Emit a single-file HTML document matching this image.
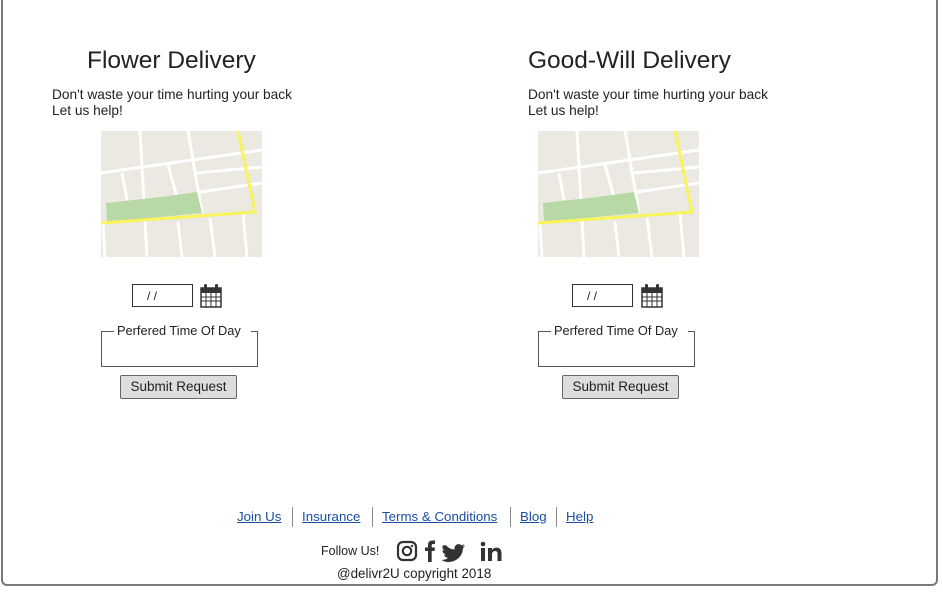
<!DOCTYPE html>
<html><head><meta charset="utf-8"><style>
body{margin:0;width:943px;height:597px;background:#fff;font-family:"Liberation Sans",sans-serif;color:#222;position:relative;overflow:hidden}
.frame{position:absolute;left:1px;top:-10px;width:933px;height:592px;border:2px solid #7a7a7a;border-radius:0 0 6px 6px}
.a{position:absolute;white-space:nowrap}
h1{position:absolute;margin:0;font-weight:normal;font-size:24.5px;white-space:nowrap}
.p{font-size:13.7px;line-height:16px}
.date{position:absolute;width:61px;height:23px;border:1px solid #333;font-size:12px;box-sizing:border-box;padding:4px 0 0 14px}
.fs{position:absolute;width:157px;height:36px;border:1px solid #555;border-top:none;box-sizing:border-box}
.fs:before{content:"";position:absolute;left:0;top:0;width:12px;border-top:1px solid #555}
.fs:after{content:"";position:absolute;right:0;top:0;width:6px;border-top:1px solid #555}
.fs span{position:absolute;left:15px;top:-8px;font-size:12.8px}
.btn{position:absolute;width:117px;height:24px;border:1px solid #666;background:#ddd;font-size:13.5px;text-align:center;line-height:22px;box-sizing:border-box;border-radius:2px}
.links a{color:#1a4fa0;text-decoration:underline;font-size:13.3px}
.sep{position:absolute;width:1px;height:20px;background:#888;top:507px}
</style></head><body>
<div class="frame"></div>
<svg width="0" height="0" style="position:absolute"><defs>
<g id="map">
<rect width="161" height="126" fill="#ebe9e1"/>
<g stroke="#fff" stroke-width="3" fill="none">
<path d="M0 42 L161 19"/><path d="M96 42 L161 36"/><path d="M99 61 L161 52"/>
<path d="M39 0 L46 126"/><path d="M87 0 L101 82"/><path d="M21 42 L26 69"/>
<path d="M67 34 L76 66"/><path d="M77 91 L81 126"/><path d="M109 87 L114 126"/><path d="M142 82 L146 126"/><path d="M2 93 L4 126"/>
</g>
<path d="M5 72 L60 66 L96 61 L101 82 L6 91Z" fill="#b8d9a5"/>
<path d="M137 0 L154 81 L0 92" stroke="#f8f45a" stroke-width="3" fill="none"/>
</g>
<g id="cal">
<rect x="1" y="4" width="20" height="19" fill="none" stroke="#333" stroke-width="1.5"/>
<rect x="1" y="4" width="20" height="5" fill="#333"/>
<path d="M1 13H21M1 17H21M6 9V23M11 9V23M16 9V23" stroke="#333" stroke-width="1"/>
<rect x="4" y="0" width="3" height="6" rx="1.5" fill="#333"/><rect x="15" y="0" width="3" height="6" rx="1.5" fill="#333"/>
</g></defs></svg>

<h1 style="left:87px;top:47px">Flower Delivery</h1>
<div class="a p" style="left:52px;top:87px">Don't waste your time hurting your back<br>Let us help!</div>
<svg class="a" style="left:101px;top:131px" width="161" height="126"><use href="#map"/></svg>
<div class="date" style="left:132px;top:284px">/ /</div>
<svg class="a" style="left:200px;top:284px" width="23" height="24"><use href="#cal"/></svg>
<div class="fs" style="left:101px;top:331px"><span>Perfered Time Of Day</span></div>
<div class="btn" style="left:120px;top:375px">Submit Request</div>

<h1 style="left:528px;top:47px">Good-Will Delivery</h1>
<div class="a p" style="left:528px;top:87px">Don't waste your time hurting your back<br>Let us help!</div>
<svg class="a" style="left:538px;top:131px" width="161" height="126"><use href="#map"/></svg>
<div class="date" style="left:572px;top:284px">/ /</div>
<svg class="a" style="left:641px;top:284px" width="23" height="24"><use href="#cal"/></svg>
<div class="fs" style="left:538px;top:331px"><span>Perfered Time Of Day</span></div>
<div class="btn" style="left:562px;top:375px">Submit Request</div>

<div class="links">
<a class="a" style="left:237px;top:509px">Join Us</a>
<div class="sep" style="left:292px"></div>
<a class="a" style="left:302px;top:509px">Insurance</a>
<div class="sep" style="left:372px"></div>
<a class="a" style="left:382px;top:509px">Terms &amp; Conditions</a>
<div class="sep" style="left:510px"></div>
<a class="a" style="left:520px;top:509px">Blog</a>
<div class="sep" style="left:556px"></div>
<a class="a" style="left:566px;top:509px">Help</a>
</div>
<div class="a" style="left:321px;top:544px;font-size:12.5px">Follow Us!</div>
<svg class="a" style="left:396px;top:540px" width="110" height="24">
<rect x="2" y="2" width="18" height="18" rx="5" fill="none" stroke="#333" stroke-width="2.2"/>
<circle cx="11" cy="11" r="4.2" fill="none" stroke="#333" stroke-width="2.2"/>
<circle cx="16" cy="6" r="1.2" fill="#333"/>
<path d="M32 22V11H29V7.5H32V5C32 2 33.5 0.5 36.5 0.5H39V4H37C36 4 35.7 4.5 35.7 5.5V7.5H39L38.5 11H35.7V22Z" fill="#333"/>
<g transform="translate(48,1) scale(1.05)">
<path d="M2 4C4 6.5 7 8 10 8C9.5 4 13.5 1.5 16.5 4C17.5 4 18.5 3.5 19.5 3C19 4 18.5 4.8 17.5 5.5C18.5 5.5 19.3 5 20 4.8C19.5 5.8 18.5 6.6 18 7C18 14 12 20 4 20C1.5 20 -0.5 19.3 -2.5 18C0 18.2 2.3 17.5 4 16C2 16 0.5 14.8 0 13C0.7 13.2 1.5 13.2 2 13C0 12.5 -1.5 10.8 -1.5 8.7C-0.8 9 -0.2 9.2 0.5 9.2C-1.2 8 -2 6 -1 4Z" fill="#333"/>
</g>
<rect x="85" y="8" width="4" height="13" fill="#333"/><circle cx="87" cy="4" r="2.3" fill="#333"/>
<path d="M92 8H96V10C97 8.5 98.5 7.6 100.5 7.6C104 7.6 105.5 9.7 105.5 13.5V21H101.5V14C101.5 12 100.8 11 99.3 11C97.6 11 96 12.2 96 14.5V21H92Z" fill="#333"/>
</svg>
<div class="a" style="left:337px;top:566px;font-size:13.4px">@delivr2U copyright 2018</div>
</body></html>
